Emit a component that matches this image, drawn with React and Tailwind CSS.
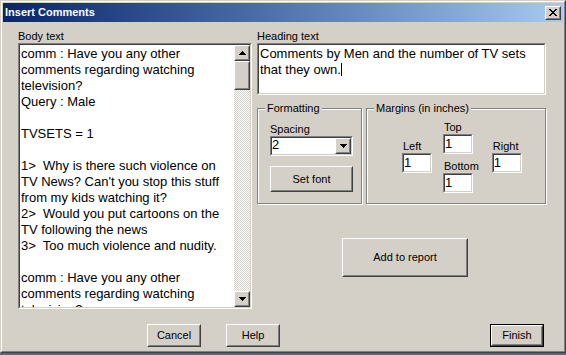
import React from "react";

// 3D frames in the classic grey look
function Raised({ className = "", inner = "", children }) {
  return (
    <div className={`border border-t-white border-l-white border-r-[#404040] border-b-[#404040] bg-[#d4d0c8] ${className}`}>
      <div className={`h-full w-full border border-t-[#d4d0c8] border-l-[#d4d0c8] border-r-[#808080] border-b-[#808080] ${inner}`}>
        {children}
      </div>
    </div>
  );
}

function Sunken({ className = "", inner = "", children }) {
  return (
    <div className={`border border-t-[#808080] border-l-[#808080] border-r-white border-b-white ${className}`}>
      <div className={`h-full w-full border border-t-[#404040] border-l-[#404040] border-r-[#d4d0c8] border-b-[#d4d0c8] bg-white ${inner}`}>
        {children}
      </div>
    </div>
  );
}

function Button({ className = "", children }) {
  return (
    <Raised className={className} inner="flex items-center justify-center text-[11px]">
      {children}
    </Raised>
  );
}

function ArrowUp() {
  return (
    <svg width="7" height="4" viewBox="0 0 7 4">
      <path d="M3 0h1v1h1v1h1v1h1v1H0V3h1V2h1V1h1z" fill="#000" />
    </svg>
  );
}

function ArrowDown() {
  return (
    <svg width="7" height="4" viewBox="0 0 7 4">
      <path d="M0 0h7v1H6v1H5v1H4v1H3V3H2V2H1V1H0z" fill="#000" />
    </svg>
  );
}

function CloseX() {
  return (
    <svg width="8" height="7" viewBox="0 0 8 7">
      <path
        d="M0 0h2v1H0z M6 0h2v1H6z M1 1h2v1H1z M5 1h2v1H5z M2 2h4v1H2z M3 3h2v1H3z M2 4h4v1H2z M1 5h2v1H1z M5 5h2v1H5z M0 6h2v1H0z M6 6h2v1H6z"
        fill="#000"
      />
    </svg>
  );
}

function Group({ title, className = "", children }) {
  return (
    <div className={`border border-[#808080] shadow-[inset_1px_1px_0_#fff,1px_1px_0_#fff] ${className}`}>
      <div className="-mt-[7px] ml-[7px] w-fit bg-[#d4d0c8] px-[2px] h-[13px] text-[11px] leading-[13px]">
        {title}
      </div>
      {children}
    </div>
  );
}

function MarginInput({ label }) {
  return (
    <div className="flex flex-col">
      <div className="h-[13px] pl-px text-[11px] leading-[13px]">{label}</div>
      <Sunken className="w-[30px] h-[20px]" inner="text-[13px] leading-[16px]">
        1
      </Sunken>
    </div>
  );
}

const bodyLines = [
  "comm : Have you any other",
  "comments regarding watching",
  "television?",
  "Query : Male",
  "",
  "TVSETS = 1",
  "",
  "1>  Why is there such violence on",
  "TV News? Can't you stop this stuff",
  "from my kids watching it?",
  "2>  Would you put cartoons on the",
  "TV following the news",
  "3>  Too much violence and nudity.",
  "",
  "comm : Have you any other",
  "comments regarding watching",
  "television?",
];

export default function App() {
  return (
    <div className="w-[566px] h-[355px] bg-[#3a6ea5] font-['Liberation_Sans',Arial,sans-serif] text-black">
      {/* Window frame */}
      <div className="w-[566px] h-[353px] border border-t-[#d4d0c8] border-l-[#d4d0c8] border-r-[#404040] border-b-[#404040]">
        <div className="h-full border border-t-white border-l-white border-r-[#808080] border-b-[#808080] bg-[#d4d0c8] p-px flex flex-col">
          {/* Title bar */}
          <div className="h-[19px] flex items-center bg-linear-to-r from-[#0a246a] to-[#a6caf0] px-[2px]">
            <span className="text-white font-bold text-[11px] leading-[19px]">Insert Comments</span>
            <Raised className="ml-auto w-[16px] h-[14px]" inner="flex items-center justify-center">
              <CloseX />
            </Raised>
          </div>

          {/* Client */}
          <div className="flex pl-[15px]">
            {/* Body text */}
            <div className="w-[234px] flex flex-col">
              <div className="mt-[7px] h-[14px] text-[11px] leading-[14px]">Body text</div>
              <Sunken className="h-[266px]" inner="flex">
                <div className="flex-1 overflow-hidden pl-px pt-px text-[13px] leading-[16px] whitespace-pre">
                  {bodyLines.map((l, i) => (
                    <div key={i} className="h-[16px]">{l}</div>
                  ))}
                </div>
                <div className="w-[16px] h-full flex flex-col bg-[image:repeating-conic-gradient(#d4d0c8_0_25%,#ffffff_0_50%)] bg-[length:2px_2px]">
                  <Raised className="w-[16px] h-[16px]" inner="flex items-center justify-center">
                    <ArrowUp />
                  </Raised>
                  <Raised className="w-[16px] h-[29px]" />
                  <div className="flex-1" />
                  <Raised className="w-[16px] h-[16px]" inner="flex items-center justify-center">
                    <ArrowDown />
                  </Raised>
                </div>
              </Sunken>
            </div>

            {/* Right side */}
            <div className="ml-[5px] w-[289px] flex flex-col">
              <div className="mt-[7px] h-[14px] text-[11px] leading-[14px]">Heading text</div>
              <Sunken className="h-[52px]" inner="pl-px pt-px text-[13px] leading-[16px]">
                <div>Comments by Men and the number of TV sets</div>
                <div>
                  that they own.
                  <span className="inline-block w-px h-[13px] bg-black align-[-2px]" />
                </div>
              </Sunken>

              <div className="mt-[13px] flex gap-[4px]">
                {/* Formatting */}
                <Group title="Formatting" className="w-[105px] h-[96px]">
                  <div className="ml-[12px] flex flex-col">
                    <div className="mt-[7px] h-[14px] text-[11px] leading-[14px]">Spacing</div>
                    <Sunken className="w-[83px] h-[20px]" inner="flex">
                      <div className="flex-1 text-[13px] leading-[14px]">2</div>
                      <Raised className="w-[16px] h-[16px]" inner="flex items-center justify-center">
                        <ArrowDown />
                      </Raised>
                    </Sunken>
                    <Button className="mt-[10px] w-[83px] h-[26px]">Set font</Button>
                  </div>
                </Group>

                {/* Margins */}
                <Group title="Margins (in inches)" className="w-[180px] h-[96px]">
                  <div className="flex items-start">
                    <div className="ml-[35px] mt-[25px]">
                      <MarginInput label="Left" />
                    </div>
                    <div className="ml-[11px] mt-[6px] flex flex-col">
                      <MarginInput label="Top" />
                      <div className="mt-[6px]">
                        <MarginInput label="Bottom" />
                      </div>
                    </div>
                    <div className="ml-[13px] mt-[25px]">
                      <MarginInput label="Right" />
                    </div>
                  </div>
                </Group>
              </div>

              <Button className="mt-[34px] ml-[85px] w-[126px] h-[39px]">Add to report</Button>
            </div>
          </div>

          {/* Bottom buttons */}
          <div className="mt-[15px] flex pl-[144px]">
            <Button className="w-[54px] h-[23px]">Cancel</Button>
            <Button className="ml-[25px] w-[54px] h-[23px]">Help</Button>
            <div className="ml-[210px] border border-black">
              <Button className="w-[52px] h-[21px]">Finish</Button>
            </div>
          </div>
        </div>
      </div>
    </div>
  );
}
